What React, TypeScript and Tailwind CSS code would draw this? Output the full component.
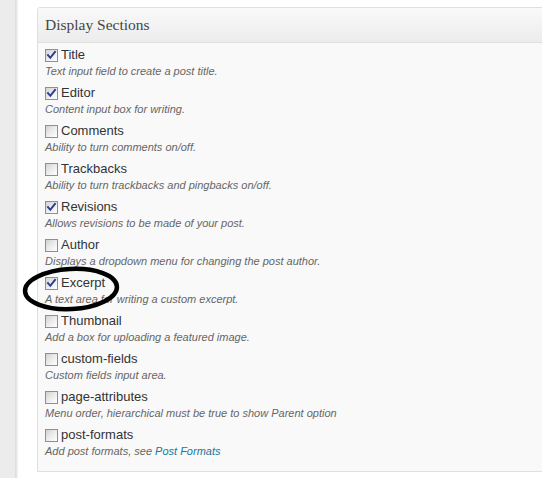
import React from "react";

type Item = { label: string; desc: React.ReactNode; checked: boolean };

const items: Item[] = [
  { label: "Title", desc: "Text input field to create a post title.", checked: true },
  { label: "Editor", desc: "Content input box for writing.", checked: true },
  { label: "Comments", desc: "Ability to turn comments on/off.", checked: false },
  { label: "Trackbacks", desc: "Ability to turn trackbacks and pingbacks on/off.", checked: false },
  { label: "Revisions", desc: "Allows revisions to be made of your post.", checked: true },
  { label: "Author", desc: "Displays a dropdown menu for changing the post author.", checked: false },
  { label: "Excerpt", desc: "A text area for writing a custom excerpt.", checked: true },
  { label: "Thumbnail", desc: "Add a box for uploading a featured image.", checked: false },
  { label: "custom-fields", desc: "Custom fields input area.", checked: false },
  { label: "page-attributes", desc: "Menu order, hierarchical must be true to show Parent option", checked: false },
  {
    label: "post-formats",
    desc: (
      <>
        Add post formats, see <span className="text-[#21759b]">Post Formats</span>
      </>
    ),
    checked: false,
  },
];

function Box({ checked }: { checked: boolean }) {
  return (
    <span className="relative mt-[3px] inline-block h-[13px] w-[13px] shrink-0 border border-[#8f8f8f] bg-gradient-to-br from-[#d2d2d2] via-[#ececec] to-white">
      {checked && (
        <svg viewBox="0 0 11 11" className="absolute left-0 top-0 h-[11px] w-[11px]">
          <path d="M2 5.2 L4.3 7.8 L9 1.8" fill="none" stroke="#2f3f8f" strokeWidth="2" strokeLinecap="square" />
        </svg>
      )}
    </span>
  );
}

export default function App() {
  return (
    <div className="flex min-h-[478px] w-[542px] overflow-hidden bg-white">
      <div className="w-[15px] shrink-0 bg-[#ececec]" />
      <div className="w-[3px] shrink-0 bg-gradient-to-r from-[#dadada] to-[#f4f4f4]" />
      <div className="relative shrink-0 pl-[19px] pt-[7px]">
        <div className="w-[520px] overflow-hidden rounded-tl-[3px] border border-[#dfdfdf] bg-[#f9f9f9]">
          <div className="flex h-[35px] items-center border-b border-[#dfdfdf] bg-gradient-to-b from-[#f9f9f9] to-[#ececec] px-[7px] pb-[1px]">
            <span className="text-[15.5px] text-[#464646] [font-family:'Liberation_Serif',serif]">
              Display Sections
            </span>
          </div>
          <div className="px-[7px] pb-[7px] pt-[3px] [font-family:'Liberation_Sans',Arial,sans-serif]">
            {items.map((it) => (
              <div key={it.label} className="mb-[6px]">
                <div className="flex h-[18px] items-start gap-[3px]">
                  <Box checked={it.checked} />
                  <span className="text-[13px] leading-[18px] text-[#333]">{it.label}</span>
                </div>
                <div className="text-[11px] italic leading-[14px] text-[#666]">{it.desc}</div>
              </div>
            ))}
          </div>
        </div>
        <svg
          className="pointer-events-none absolute left-[4px] top-[265px] h-[48px] w-[100px]"
          viewBox="0 0 100 48"
        >
          <ellipse cx="49" cy="24" rx="46" ry="20" fill="none" stroke="#000" strokeWidth="4.5" transform="rotate(-3 49 24)" />
        </svg>
      </div>
    </div>
  );
}
